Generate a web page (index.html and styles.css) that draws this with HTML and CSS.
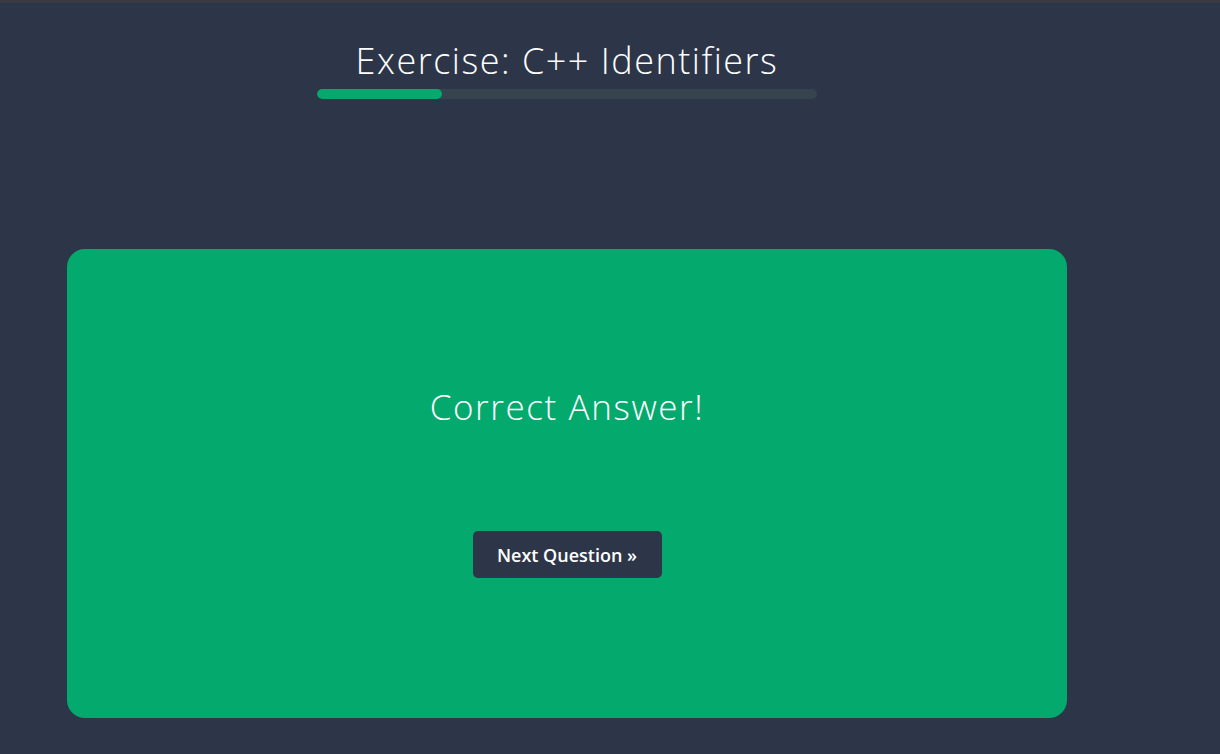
FILE: index.html
```html
<!DOCTYPE html>
<html>
<head>
<meta charset="utf-8">
<link rel="stylesheet" href="styles.css">
</head>
<body>
<div class="topline"></div>
<main class="page">
  <header class="head">
    <h1 class="title">Exercise: C++ Identifiers</h1>
    <div class="progress"><div class="progress-fill" style="width:25%"></div></div>
  </header>
  <section class="card">
    <h2 class="result">Correct Answer!</h2>
    <button class="next">Next Question »</button>
  </section>
</main>
</body>
</html>
```

FILE: styles.css
```css
html, body {
  margin: 0;
  padding: 0;
}
body {
  background: #2d3648;
  font-family: "Open Sans", "Noto Sans", sans-serif;
  color: #fff;
  height: 754px;
  overflow: hidden;
}
.topline {
  height: 3px;
  background: #3a3b42;
}
.page {
  width: 1000px;
  margin-left: 67px;
  display: flex;
  flex-direction: column;
  align-items: center;
}
.head {
  display: flex;
  flex-direction: column;
  align-items: center;
  padding-top: 36px;
}
.title {
  margin: 0;
  font-weight: 300;
  font-size: 36px;
  line-height: 44px;
  letter-spacing: 1.5px;
}
.progress {
  margin-top: 6px;
  width: 500px;
  height: 10px;
  border-radius: 5px;
  background: #37434e;
  overflow: hidden;
}
.progress-fill {
  height: 100%;
  background: #04aa6d;
  border-radius: 5px;
}
.card {
  margin-top: 150px;
  width: 1000px;
  height: 469px;
  background: #04aa6d;
  border-radius: 18px;
  display: flex;
  flex-direction: column;
  align-items: center;
  box-sizing: border-box;
  padding-top: 133px;
}
.result {
  margin: 0;
  font-weight: 300;
  font-size: 35px;
  line-height: 50px;
  letter-spacing: 1.6px;
}
.next {
  margin-top: 99px;
  width: 189px;
  height: 47px;
  border: none;
  border-radius: 5px;
  background: #2d3648;
  color: #fff;
  font-family: "Open Sans", "Noto Sans", sans-serif;
  font-weight: 600;
  font-size: 18px;
  cursor: pointer;
}
```
